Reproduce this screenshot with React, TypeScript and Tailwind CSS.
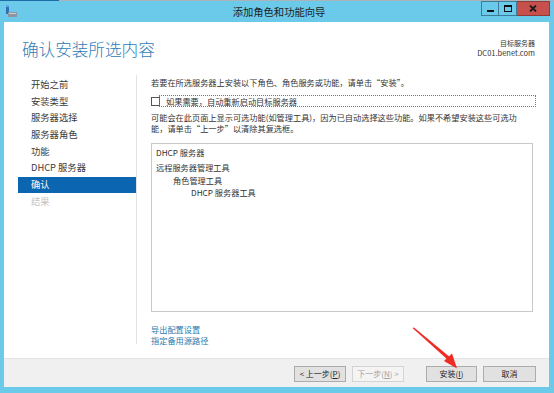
import React from 'react'

const navItems = ['开始之前', '安装类型', '服务器选择', '服务器角色', '功能', 'DHCP 服务器', '确认', '结果']

function WindowIcon() {
  return (
    <svg width="12" height="13" viewBox="0 0 12 13">
      <rect x="1" y="0" width="3" height="9" fill="#2f6fb6" />
      <rect x="1" y="0" width="3" height="2" fill="#5fa4e6" />
      <rect x="3" y="7" width="9" height="5" fill="#8c96a3" />
      <rect x="4" y="8" width="7" height="1" fill="#c9d0d8" />
    </svg>
  )
}

function TitleButtons() {
  return (
    <div className="flex h-[15px] self-start">
      <div className="w-[18px] h-full border border-[#3d7c99] flex items-end justify-center pb-[3px]">
        <div className="w-[7px] h-[2px] bg-[#111]" />
      </div>
      <div className="w-[18px] h-full border-y border-r border-[#3d7c99] flex items-center justify-center">
        <div className="w-[8px] h-[7px] border border-t-2 border-[#111]" />
      </div>
      <div className="w-[33px] h-full bg-[#c7504c] border-y border-r border-[#8f3a36] flex items-center justify-center">
        <svg width="8" height="7" viewBox="0 0 8 7">
          <path d="M1 0.5 L7 6.5 M7 0.5 L1 6.5" stroke="#1b1b1b" strokeWidth="1.8" />
        </svg>
      </div>
    </div>
  )
}

function Btn({ children, disabled }: { children: React.ReactNode; disabled?: boolean }) {
  return (
    <div
      className={
        disabled
          ? 'h-[16px] flex items-center justify-center border border-[#d4d4d4] bg-[#f4f4f4] text-[#a3a3a3]'
          : 'h-[16px] flex items-center justify-center border border-[#acacac] bg-[#e1e1e1] text-[#222]'
      }
    >
      {children}
    </div>
  )
}

export default function App() {
  return (
    <div className="relative w-[554px] h-[393px] bg-[#6bc9e9] flex flex-col overflow-hidden font-['Noto_Sans_CJK_SC','Noto_Sans',sans-serif]">
      {/* top edge */}
      <div className="flex h-px">
        <div className="w-[59px] bg-[#1d6ea6]" />
        <div className="flex-1 bg-[#a9b3b8]" />
      </div>

      {/* title bar */}
      <div className="h-[21px] flex items-center pl-[5px] pr-[4px]">
        <WindowIcon />
        <div className="flex-1 text-center text-[10.3px] leading-[14px] text-[#1e1e1e] pl-[60px]">添加角色和功能向导</div>
        <TitleButtons />
      </div>

      {/* client area */}
      <div className="flex-1 ml-[4px] mr-[5px] flex flex-col">
        <div className="flex-1 bg-white flex flex-col">
          <div className="flex justify-between pl-[18px] pr-[14px] pt-[17px]">
            <div className="text-[16.6px] leading-[20px] font-light text-[#2f7cb6]">确认安装所选内容</div>
            <div className="text-right text-[#333]">
              <div className="text-[7px] leading-[9px]">目标服务器</div>
              <div className="text-[7.5px] leading-[9px]">DC01.benet.com</div>
            </div>
          </div>

          <div className="flex mt-[16px] h-[269px]">
            {/* nav */}
            <div className="ml-[14px] w-[119px] pt-[1.6px] border-r border-[#e3e3e3]">
              {navItems.map((item, i) => (
                <div
                  key={item}
                  className={
                    i === 6
                      ? 'h-[16.7px] pl-[13px] flex items-center text-[9.3px] bg-[#0b65b0] text-white'
                      : i === 7
                        ? 'h-[16.7px] pl-[13px] flex items-center text-[9.3px] text-[#c3c3c3]'
                        : 'h-[16.7px] pl-[13px] flex items-center text-[9.3px] text-[#3a3a3a]'
                  }
                >
                  {item}
                </div>
              ))}
            </div>

            {/* content */}
            <div className="flex-1 pl-[14px] pr-[13px] pt-[2px] text-[8.2px] leading-[11px] text-[#333]">
              <div>若要在所选服务器上安装以下角色、角色服务或功能，请单击“安装”。</div>
              <div className="flex items-center mt-[7px] h-[12px]">
                <div className="w-[9px] h-[9px] border border-[#555] bg-white shrink-0" />
                <div className="flex-1 h-full ml-[-1px] border border-dotted border-[#777] pl-[6px] flex items-center">
                  如果需要，自动重新启动目标服务器
                </div>
              </div>
              <div className="mt-[4.5px]">
                可能会在此页面上显示可选功能(如管理工具)，因为已自动选择这些功能。如果不希望安装这些可选功
                <br />
                能，请单击“上一步”以清除其复选框。
              </div>
              <div className="mt-[9.5px] mr-[3px] h-[169px] border border-[#c9c9c9] pl-[4px] pt-[3px]">
                <div>DHCP 服务器</div>
                <div className="mt-[4px]">远程服务器管理工具</div>
                <div className="pl-[17px] mt-[1.5px]">角色管理工具</div>
                <div className="pl-[35px] mt-[1.5px]">DHCP 服务器工具</div>
              </div>
              <div className="mt-[11.5px] text-[#2a7db0]">
                <div>导出配置设置</div>
                <div>指定备用源路径</div>
              </div>
            </div>
          </div>
        </div>

        {/* footer */}
        <div className="h-[29px] bg-[#f0f0f0] border-t border-[#e4e4e4] flex items-start justify-end pt-[7px] pr-[13px] text-[8px]">
          <div className="w-[52px]">
            <Btn>&lt; 上一步(<u>P</u>)</Btn>
          </div>
          <div className="w-[52px] ml-[6px]">
            <Btn disabled>下一步(<u>N</u>) &gt;</Btn>
          </div>
          <div className="w-[51px] ml-[22px]">
            <Btn>安装(<u>I</u>)</Btn>
          </div>
          <div className="w-[53px] ml-[6px]">
            <Btn>取消</Btn>
          </div>
        </div>
      </div>
      <div className="h-[6px]" />

      {/* red annotation arrow */}
      <svg className="absolute left-0 top-0 pointer-events-none" width="554" height="393">
        <polygon points="412.5,328 414,327.5 451,358 448.5,360.5" fill="#ee2b24" />
        <polygon points="457,368.5 444,361 452,353.5" fill="#ee2b24" />
      </svg>
    </div>
  )
}
